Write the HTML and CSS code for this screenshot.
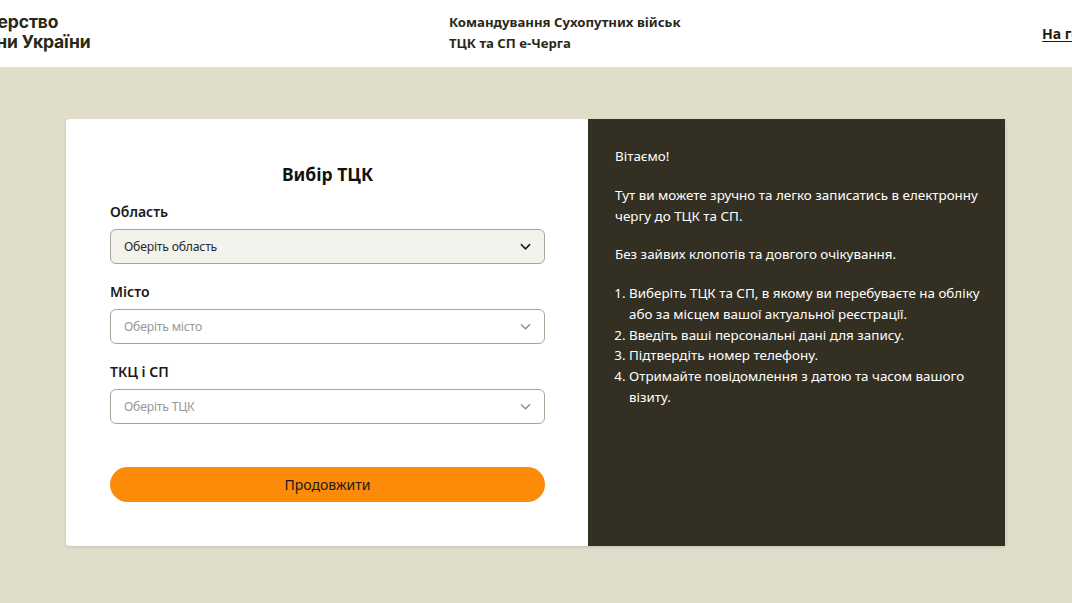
FILE: index.html
```html
<!DOCTYPE html>
<html lang="uk">
<head>
<meta charset="utf-8">
<link rel="stylesheet" href="styles.css">
</head>
<body>
<header class="header">
  <div class="header-inner">
    <div class="logo">
      <div>Міністерство</div>
      <div>оборони України</div>
    </div>
    <div class="title">
      <div>Командування Сухопутних військ</div>
      <div>ТЦК та СП е-Черга</div>
    </div>
    <a class="home" href="#">На головну</a>
  </div>
</header>
<main class="main">
  <div class="card">
    <section class="form">
      <h1 class="form-title">Вибір ТЦК</h1>
      <div class="field">
        <label class="label">Область</label>
        <div class="select active">
          <span>Оберіть область</span>
          <svg class="chev" viewBox="0 0 12 8" width="11" height="8"><path d="M1.5 1.5 L6 6 L10.5 1.5" fill="none" stroke="#222" stroke-width="1.8" stroke-linecap="round" stroke-linejoin="round"/></svg>
        </div>
      </div>
      <div class="field">
        <label class="label">Місто</label>
        <div class="select disabled">
          <span>Оберіть місто</span>
          <svg class="chev" viewBox="0 0 12 8" width="11" height="8"><path d="M1.5 1.5 L6 6 L10.5 1.5" fill="none" stroke="#888" stroke-width="1.5" stroke-linecap="round" stroke-linejoin="round"/></svg>
        </div>
      </div>
      <div class="field">
        <label class="label">ТКЦ і СП</label>
        <div class="select disabled">
          <span>Оберіть ТЦК</span>
          <svg class="chev" viewBox="0 0 12 8" width="11" height="8"><path d="M1.5 1.5 L6 6 L10.5 1.5" fill="none" stroke="#888" stroke-width="1.5" stroke-linecap="round" stroke-linejoin="round"/></svg>
        </div>
      </div>
      <button class="btn">Продовжити</button>
    </section>
    <aside class="info">
      <p>Вітаємо!</p>
      <p>Тут ви можете зручно та легко записатись в електронну чергу до ТЦК та СП.</p>
      <p>Без зайвих клопотів та довгого очікування.</p>
      <ol>
        <li>Виберіть ТЦК та СП, в якому ви перебуваєте на обліку або за місцем вашої актуальної реєстрації.</li>
        <li>Введіть ваші персональні дані для запису.</li>
        <li>Підтвердіть номер телефону.</li>
        <li>Отримайте повідомлення з датою та часом вашого візиту.</li>
      </ol>
    </aside>
  </div>
</main>
</body>
</html>
```
FILE: styles.css
```css
* { box-sizing: border-box; }
html, body { margin: 0; padding: 0; }
body {
  background: #e0ddca;
  font-family: "Noto Sans", "Open Sans", sans-serif;
  color: #1d1b14;
  overflow: hidden;
  height: 603px;
}
.header {
  background: #fff;
  height: 67px;
  overflow: hidden;
}
.header-inner {
  display: flex;
  align-items: center;
  height: 67px;
  margin-left: -57px;
  width: 1250px;
}
.logo {
  font-family: Inter, "Liberation Sans", sans-serif;
  font-weight: 700;
  font-size: 17.5px;
  line-height: 20px;
  color: #2b2818;
  width: 506px;
  letter-spacing: -0.15px;
  margin-top: -4px;
}
.title {
  font-weight: 700;
  font-size: 13.2px;
  line-height: 21px;
  color: #2b2818;
  margin-top: -1px;
  flex: 1;
}
.home {
  font-weight: 700;
  font-size: 14px;
  color: #1d1b14;
  text-decoration: underline;
  text-underline-offset: 2px;
  margin-right: 70px;
}
.main {
  display: flex;
  justify-content: center;
  padding-top: 52px;
}
.card {
  display: flex;
  width: 940px;
  height: 427px;
  box-shadow: 0 1px 3px rgba(0,0,0,0.12);
  border-radius: 4px;
}
.form {
  width: 522px;
  background: #fff;
  border-radius: 4px 0 0 4px;
  padding: 41px 43px 0 44px;
}
.form-title {
  margin: 0 0 14px;
  text-align: center;
  font-size: 17.5px;
  font-weight: 700;
  line-height: 28px;
  color: #111;
}
.field { margin-bottom: 18px; }
.label {
  display: block;
  font-size: 14px;
  font-weight: 600;
  line-height: 20px;
  margin-bottom: 7px;
  color: #1a1a1a;
}
.select {
  height: 35px;
  border: 1px solid #a8a596;
  border-radius: 6px;
  display: flex;
  align-items: center;
  justify-content: space-between;
  padding: 0 13px 0 13px;
  font-size: 12.2px;
  letter-spacing: -0.2px;
}
.select.active { background: #f4f2ec; color: #2a2a2a; }
.select.disabled { background: #fff; color: #9a9890; }
.chev { display: block; }
.btn {
  display: block;
  width: 100%;
  height: 35px;
  margin-top: 43px;
  border: none;
  border-radius: 18px;
  background: #fd8b0a;
  font-family: inherit;
  font-size: 14px;
  color: #1a1a1a;
}
.info {
  width: 418px;
  background: #332f22;
  color: #fff;
  padding: 27px 20px 0 27px;
  font-size: 13.4px;
  line-height: 20.7px;
  border-right: 1px solid #d6d3bf;
}
.info p { margin: 0 0 18.2px; }
.info ol {
  margin: 0;
  padding-left: 14px;
}
.info li { padding-left: 0; }
```
